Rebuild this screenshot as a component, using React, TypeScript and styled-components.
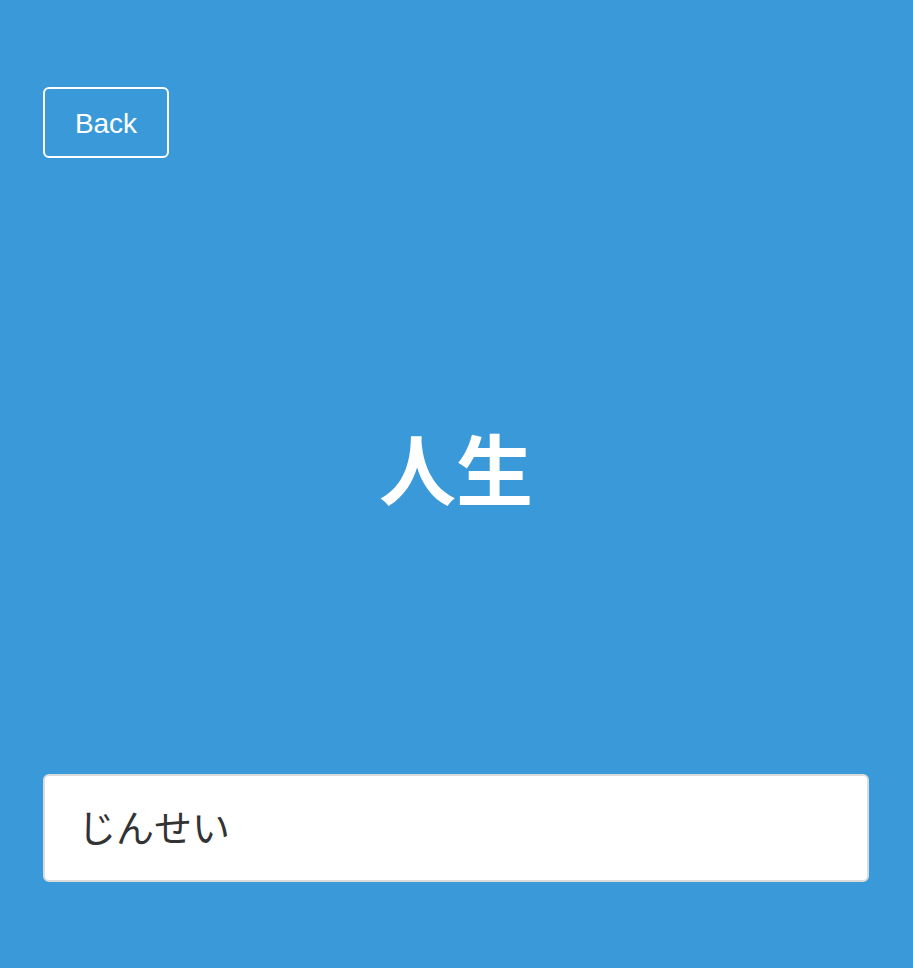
import React from "react";
import styled, { createGlobalStyle } from "styled-components";

const Global = createGlobalStyle`
  html, body { margin: 0; padding: 0; background: #3a9ad9; }
  body { font-family: "Liberation Sans", "Noto Sans CJK JP", sans-serif; }
  * { box-sizing: border-box; }
`;

const Page = styled.div`
  min-height: 968px;
  background: #3a9ad9;
  display: flex;
  flex-direction: column;
  padding: 87px 44px 86px 43px;
`;

const TopBar = styled.div`
  display: flex;
`;

const BackButton = styled.button`
  width: 126px;
  height: 71px;
  background: transparent;
  border: 2px solid #ffffff;
  border-radius: 6px;
  color: #ffffff;
  font-family: "Liberation Sans", sans-serif;
  font-size: 28px;
  padding: 3px 0 0;
  cursor: pointer;
`;

const WordArea = styled.div`
  flex: 1;
  display: flex;
  align-items: center;
  justify-content: center;
  padding-top: 0;
`;

const Word = styled.h1`
  margin: 0;
  color: #ffffff;
  font-family: "Noto Sans CJK JP", sans-serif;
  font-weight: 700;
  font-size: 77px;
  line-height: 1;
`;

const Answer = styled.input`
  width: 100%;
  height: 108px;
  background: #ffffff;
  border: 2px solid #dcdcdc;
  border-radius: 6px;
  padding: 0 33px 5px;
  font-family: "Noto Sans CJK JP", sans-serif;
  font-size: 38px;
  color: #333333;
  outline: none;
`;

export default function App() {
  return (
    <>
      <Global />
      <Page>
        <TopBar>
          <BackButton>Back</BackButton>
        </TopBar>
        <WordArea>
          <Word>人生</Word>
        </WordArea>
        <Answer defaultValue="じんせい" />
      </Page>
    </>
  );
}
